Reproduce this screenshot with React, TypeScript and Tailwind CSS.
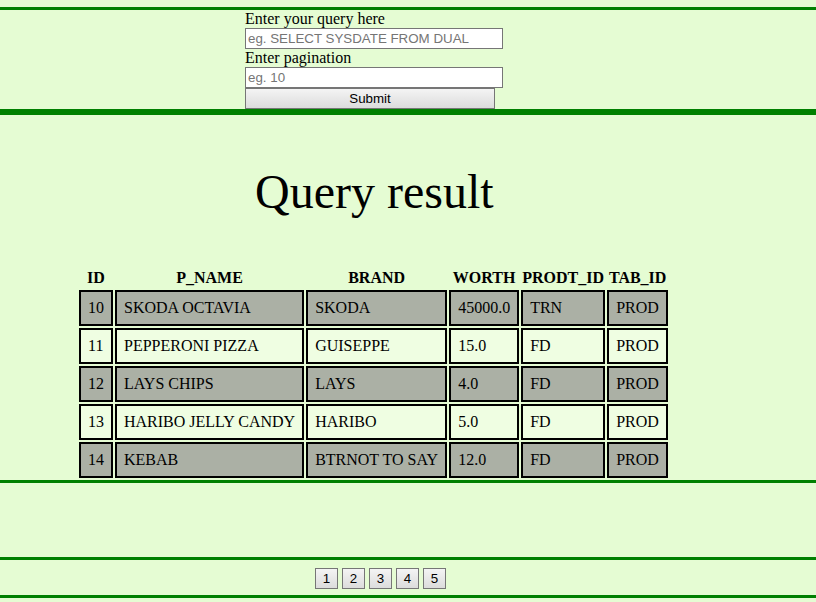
const rows = [
  { id: "10", name: "SKODA OCTAVIA", brand: "SKODA", worth: "45000.0", prodt: "TRN", tab: "PROD" },
  { id: "11", name: "PEPPERONI PIZZA", brand: "GUISEPPE", worth: "15.0", prodt: "FD", tab: "PROD" },
  { id: "12", name: "LAYS CHIPS", brand: "LAYS", worth: "4.0", prodt: "FD", tab: "PROD" },
  { id: "13", name: "HARIBO JELLY CANDY", brand: "HARIBO", worth: "5.0", prodt: "FD", tab: "PROD" },
  { id: "14", name: "KEBAB", brand: "BTRNOT TO SAY", worth: "12.0", prodt: "FD", tab: "PROD" },
];

const headers = [
  { label: "ID", width: "w-[34px]" },
  { label: "P_NAME", width: "w-[189px]" },
  { label: "BRAND", width: "w-[141px]" },
  { label: "WORTH", width: "w-[70px]" },
  { label: "PRODT_ID", width: "w-[84px]" },
  { label: "TAB_ID", width: "w-[61px]" },
];

const inputClass =
  "h-[21px] w-[258px] border border-[#767676] bg-white px-[2px] font-['Liberation_Sans','Arial',sans-serif] text-[13.33px] leading-[15px] text-black outline-none placeholder:text-[#757575]";

const buttonClass =
  "h-[21px] border border-[#767676] bg-gradient-to-b from-[#f4f4f4] to-[#dcdcdc] font-['Liberation_Sans','Arial',sans-serif] text-[13.33px] leading-[15px] text-black";

function Cell({ children, shaded }: { children: string; shaded: boolean }) {
  return (
    <td
      className={`border-2 border-black px-[7px] py-[7px] text-left text-[16px] leading-[18px] whitespace-nowrap ${
        shaded ? "bg-[#abb0a5]" : "bg-[#effee2]"
      }`}
    >
      {children}
    </td>
  );
}

export default function App() {
  return (
    <div className="min-h-[602px] bg-[#e5fcd3] pt-[7px] font-['Liberation_Serif','Times_New_Roman',serif] text-black">
      <header className="border-y-[3px] border-[#008000] pl-[245px]">
        <form className="flex w-[258px] flex-col" onSubmit={(e) => e.preventDefault()}>
          <label className="text-[16px] leading-[18px]">Enter your query here</label>
          <input className={inputClass} placeholder="eg. SELECT SYSDATE FROM DUAL" />
          <label className="text-[16px] leading-[18px]">Enter pagination</label>
          <input className={inputClass} placeholder="eg. 10" />
          <button type="submit" className={`${buttonClass} w-[250px]`}>
            Submit
          </button>
        </form>
      </header>

      <main className="border-y-[3px] border-[#008000] pt-[49px]">
        <h1 className="ml-[255px] text-[48px] leading-[56px] font-normal">Query result</h1>
        <table className="mt-[46px] ml-[77px] table-fixed border-separate border-spacing-[2px]">
          <thead>
            <tr>
              {headers.map((h) => (
                <th
                  key={h.label}
                  className={`${h.width} p-[1px] text-center text-[16px] leading-[18px] font-bold whitespace-nowrap`}
                >
                  {h.label}
                </th>
              ))}
            </tr>
          </thead>
          <tbody>
            {rows.map((r, i) => {
              const shaded = i % 2 === 0;
              return (
                <tr key={r.id}>
                  <Cell shaded={shaded}>{r.id}</Cell>
                  <Cell shaded={shaded}>{r.name}</Cell>
                  <Cell shaded={shaded}>{r.brand}</Cell>
                  <Cell shaded={shaded}>{r.worth}</Cell>
                  <Cell shaded={shaded}>{r.prodt}</Cell>
                  <Cell shaded={shaded}>{r.tab}</Cell>
                </tr>
              );
            })}
          </tbody>
        </table>
      </main>

      <div className="h-[74px]" />

      <footer className="flex h-[41px] gap-[4px] border-y-[3px] border-[#008000] pt-[8px] pl-[315px]">
        {["1", "2", "3", "4", "5"].map((p) => (
          <button key={p} className={`${buttonClass} w-[23px]`}>
            {p}
          </button>
        ))}
      </footer>
    </div>
  );
}
